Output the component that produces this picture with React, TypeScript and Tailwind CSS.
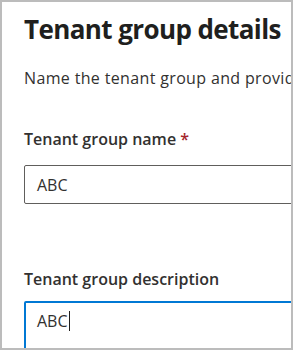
import React from "react";

export default function App() {
  return (
    <div
      className="w-[293px] h-[350px] overflow-hidden bg-white border-2 border-[#bcbcbc]"
      style={{ fontFamily: '"Open Sans", "Noto Sans", sans-serif' }}
    >
      <div className="h-full w-full overflow-hidden pl-[22px] pt-[9px] text-[#323130]">
        <h1 className="whitespace-nowrap text-[26px] leading-[36px] font-bold tracking-[-0.6px] text-[#201f1e]">
          Tenant group details
        </h1>
        <p className="mt-[21px] whitespace-nowrap text-[16px] leading-[20px] tracking-[0.35px] text-[#323130]">
          Name the tenant group and provide a description
        </p>
        <div className="mt-[41px] whitespace-nowrap text-[16px] leading-[20px] font-semibold text-[#323130]">
          Tenant group name <span className="text-[#a4262c]">*</span>
        </div>
        <div className="mt-[16px] flex h-[39px] w-[300px] items-center rounded-[2px] border border-[#605e5c] pl-[12px] text-[16px] text-[#323130]">
          ABC
        </div>
        <div className="mt-[65px] whitespace-nowrap text-[16px] leading-[20px] font-semibold text-[#323130]">
          Tenant group description
        </div>
        <div className="mt-[12px] flex h-[60px] w-[300px] items-start rounded-[2px] border-2 border-[#0078d4] pl-[11px] pt-[8px] text-[16px] leading-[20px] text-[#323130]">
          ABC<span className="ml-[1px] inline-block h-[20px] w-[1px] bg-[#201f1e]" />
        </div>
      </div>
    </div>
  );
}
